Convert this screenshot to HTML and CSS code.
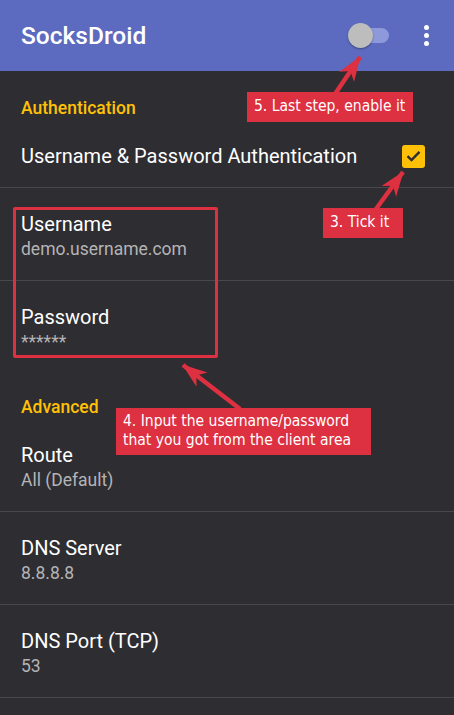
FILE: index.html
```html
<!DOCTYPE html>
<html lang="en">
  <head>
    <meta charset="UTF-8" />
    <meta name="viewport" content="width=device-width, initial-scale=1.0" />
    <title>SocksDroid</title>
    <link rel="stylesheet" href="styles.css">
  </head>
  <body>
    <header class="appbar">
      <h1 class="appbar-title">SocksDroid</h1>
      <div class="switch"><span class="switch-thumb"></span></div>
      <div class="overflow"><span></span><span></span><span></span></div>
    </header>

    <main class="prefs">
      <div class="category category-first">Authentication</div>
      <div class="pref pref-check">
        <span class="pref-title">Username &amp; Password Authentication</span>
        <span class="checkbox">
          <svg width="15" height="12" viewBox="0 0 15 12">
            <path d="M1.5 6.2 L5.5 10 L13.5 1.8" fill="none" stroke="#2e2d32" stroke-width="2.4" />
          </svg>
        </span>
      </div>
      <div class="pref">
        <div class="pref-title">Username</div>
        <div class="pref-summary">demo.username.com</div>
      </div>
      <div class="pref pref-last">
        <div class="pref-title">Password</div>
        <div class="pref-summary">******</div>
      </div>

      <div class="category">Advanced</div>
      <div class="pref">
        <div class="pref-title">Route</div>
        <div class="pref-summary">All (Default)</div>
      </div>
      <div class="pref">
        <div class="pref-title">DNS Server</div>
        <div class="pref-summary">8.8.8.8</div>
      </div>
      <div class="pref">
        <div class="pref-title">DNS Port (TCP)</div>
        <div class="pref-summary">53</div>
      </div>
    </main>

    <!-- tutorial annotations drawn over the screenshot -->
    <div class="highlight"></div>
    <svg class="arrows" width="454" height="715" viewBox="0 0 454 715">
      <defs>
        <marker id="head" markerUnits="userSpaceOnUse" markerWidth="26" markerHeight="20"
                refX="24" refY="10" orient="auto">
          <polygon points="0,1 25,10 0,19 7,10" fill="#dd3040" />
        </marker>
      </defs>
      <line x1="335" y1="94" x2="360" y2="57" stroke="#dd3040" stroke-width="4.5" marker-end="url(#head)" />
      <line x1="376" y1="209" x2="403" y2="172" stroke="#dd3040" stroke-width="4.5" marker-end="url(#head)" />
      <line x1="240" y1="409" x2="183" y2="365" stroke="#dd3040" stroke-width="4.5" marker-end="url(#head)" />
    </svg>
    <div class="callout callout-5">5. Last step, enable it</div>
    <div class="callout callout-3">3. Tick it</div>
    <div class="callout callout-4">4. Input the username/password<br>that you got from the client area</div>
  </body>
</html>
```

FILE: styles.css
```css
body {
  margin: 0;
  width: 454px;
  height: 715px;
  overflow: hidden;
  background-color: #2e2d32;
  font-family: Roboto, "Noto Sans", sans-serif;
  color: #fff;
  position: relative;
}

.appbar {
  height: 71px;
  background-color: #5c6bc0;
  display: flex;
  align-items: center;
  padding: 0 21px;
  box-sizing: border-box;
}

.appbar-title {
  margin: 2px 0 0;
  flex: 1;
  font-size: 24.5px;
  font-weight: 500;
  line-height: 1;
}

.switch {
  position: relative;
  width: 28px;
  height: 15px;
  border-radius: 8px;
  background-color: #8e99dc;
  margin-right: 35px;
}

.switch-thumb {
  position: absolute;
  left: -13px;
  top: -5px;
  width: 25px;
  height: 25px;
  border-radius: 50%;
  background-color: #bdbdbd;
  box-shadow: 0 1px 2px rgba(0, 0, 0, 0.35);
}

.overflow {
  display: flex;
  flex-direction: column;
  gap: 3px;
  margin-right: 4px;
}

.overflow span {
  width: 5px;
  height: 5px;
  border-radius: 50%;
  background-color: #fff;
}

.category {
  color: #ffc107;
  font-size: 17.5px;
  font-weight: 500;
  line-height: 22px;
  padding: 23px 21px 1px;
}

.category-first {
  padding: 26px 21px 6px;
}

.pref {
  padding: 25px 21px 17px;
  border-bottom: 1px solid #48474c;
}

.pref-last {
  border-bottom: none;
}

.pref-title {
  font-size: 20px;
  line-height: 22px;
}

.pref-summary {
  font-size: 17.5px;
  line-height: 28px;
  color: #b4b4b6;
}

.pref-check {
  display: flex;
  align-items: center;
  justify-content: space-between;
  height: 63px;
  padding: 0 29px 0 21px;
  box-sizing: border-box;
}

.checkbox {
  width: 23px;
  height: 23px;
  border-radius: 3px;
  background-color: #ffc107;
  display: flex;
  align-items: center;
  justify-content: center;
}

.highlight {
  position: absolute;
  left: 13px;
  top: 207px;
  width: 199px;
  height: 145px;
  border: 3px solid #dd3040;
  border-radius: 2px;
}

.arrows {
  position: absolute;
  left: 0;
  top: 0;
}

.callout {
  position: absolute;
  background-color: #dd3040;
  color: #fff;
  font-family: "DejaVu Sans", Verdana, sans-serif;
  font-stretch: condensed;
  font-size: 15.5px;
  line-height: 19px;
  padding: 5px 7px;
  white-space: nowrap;
  box-sizing: border-box;
}

.callout-5 {
  left: 247px;
  top: 92px;
  width: 166px;
  height: 30px;
}

.callout-3 {
  left: 323px;
  top: 208px;
  width: 80px;
  height: 30px;
}

.callout-4 {
  left: 116px;
  top: 408px;
  width: 255px;
  height: 47px;
  padding-top: 4px;
}
```
